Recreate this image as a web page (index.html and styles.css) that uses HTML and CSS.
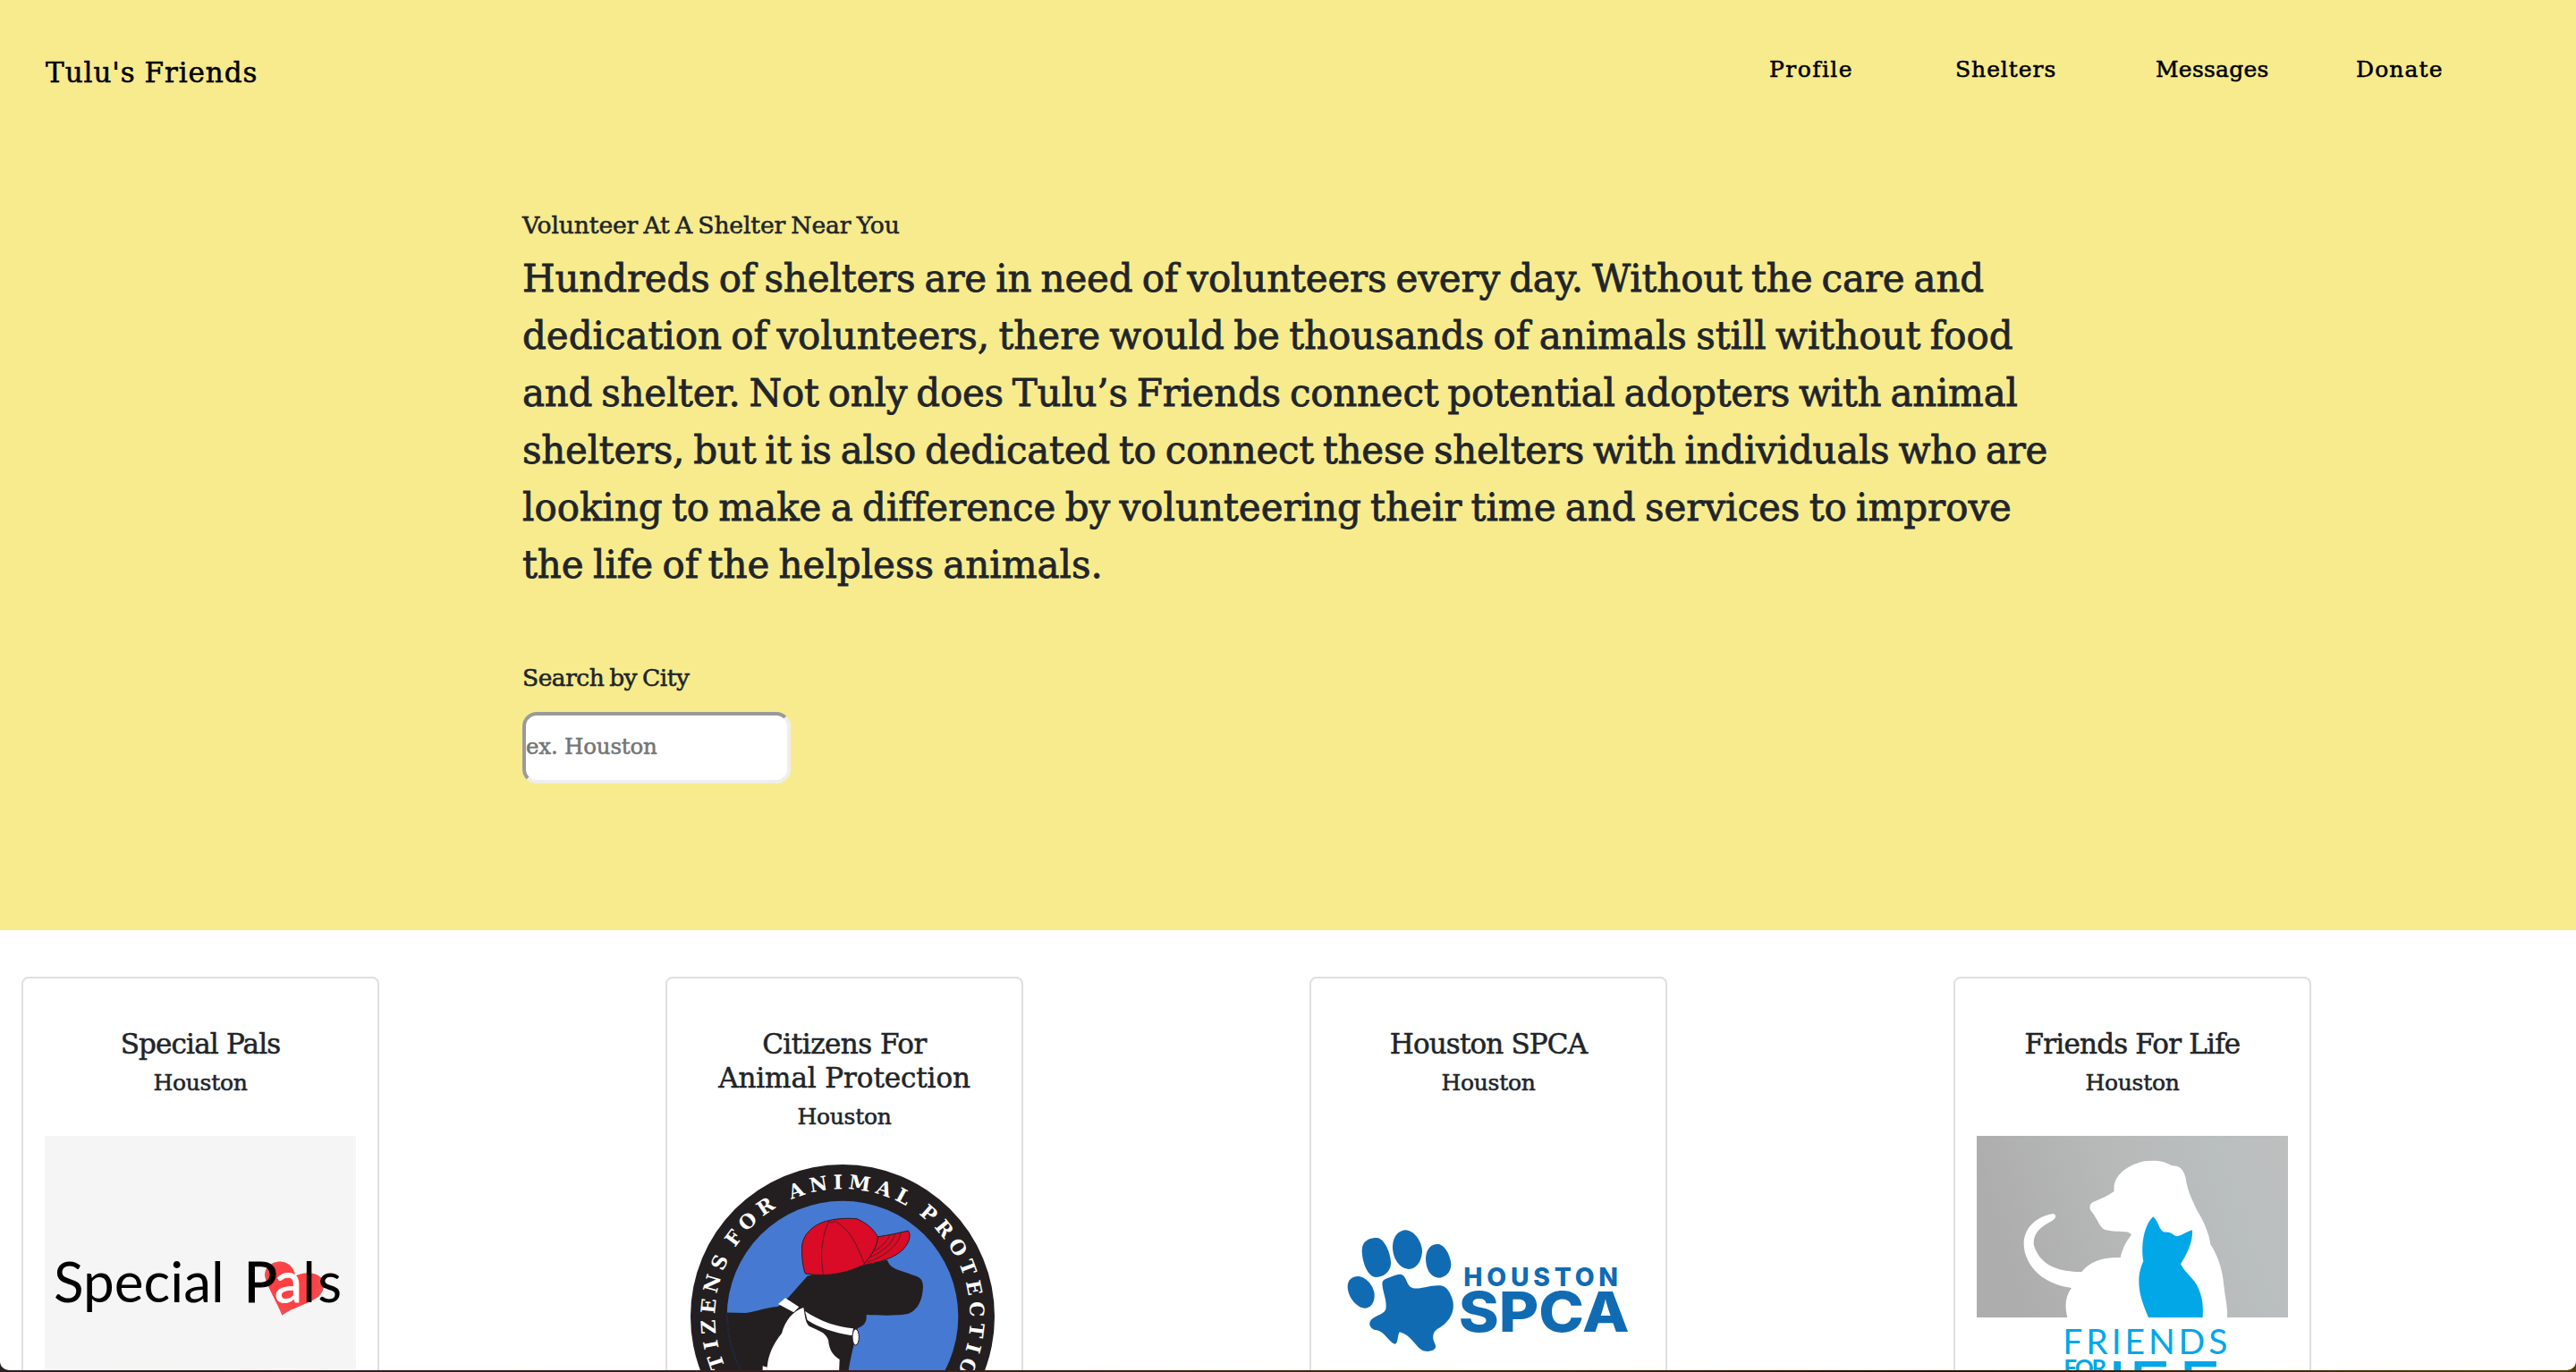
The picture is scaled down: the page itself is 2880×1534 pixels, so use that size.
FILE: index.html
```html
<!DOCTYPE html>
<html lang="en">
<head>
<meta charset="utf-8">
<title>Tulu's Friends</title>
<link rel="stylesheet" href="styles.css">
</head>
<body>
<div class="page">
  <section class="hero">
    <header class="topbar">
      <a class="brand">Tulu's Friends</a>
      <nav class="menu">
        <a class="menu-item menu-profile">Profile</a>
        <a class="menu-item menu-shelters">Shelters</a>
        <a class="menu-item menu-messages">Messages</a>
        <a class="menu-item menu-donate">Donate</a>
      </nav>
    </header>
    <div class="intro">
      <h1 class="eyebrow">Volunteer At A Shelter Near You</h1>
      <p class="lead">
        <span class="line tight">Hundreds of shelters are in need of volunteers every day. Without the care and</span>
        <span class="line">dedication of volunteers, there would be thousands of animals still without food</span>
        <span class="line tighter">and shelter. Not only does Tulu’s Friends connect potential adopters with animal</span>
        <span class="line tighter">shelters, but it is also dedicated to connect these shelters with individuals who are</span>
        <span class="line">looking to make a difference by volunteering their time and services to improve</span>
        <span class="line">the life of the helpless animals.</span>
      </p>
      <label class="search-label" for="city">Search by City</label>
      <input class="search-input" id="city" type="text" placeholder="ex. Houston">
    </div>
  </section>
  <section class="shelters">
    <article class="card">
      <h2 class="card-title">Special Pals</h2>
      <p class="card-city">Houston</p>
      <svg class="logo" viewBox="150 630 1044 786" width="348" height="262">
        <defs><radialGradient id="heart" cx=".45" cy=".45" r=".6"><stop offset="0" stop-color="#ff3f42"/><stop offset=".65" stop-color="#fb4246"/><stop offset="1" stop-color="#e2595b"/></radialGradient></defs>
        <rect x="150" y="630" width="1044" height="786" fill="#f5f5f5"/>
        <path d="M946 1232C930 1190 898 1140 889 1104C884 1068 916 1050 945 1052C972 1055 986 1074 991 1100C1015 1086 1056 1084 1078 1106C1094 1126 1086 1158 1062 1174C1030 1194 980 1208 946 1232Z" fill="url(#heart)"/>
        <g font-family="Lato, sans-serif" font-size="186" fill="#000">
          <text x="180" y="1188" textLength="572">Special</text>
          <text x="818" y="1188" stroke="#000" stroke-width="3">P</text>
          <text x="921" y="1188" fill="#fff" stroke="#fff" stroke-width="3">a</text>
          <text x="1015" y="1188">l</text>
          <text x="1066" y="1188">s</text>
        </g>
      </svg>
    </article>
    <article class="card">
      <h2 class="card-title title-wide"><span class="title-first">Citizens For</span><br>Animal Protection</h2>
      <p class="card-city">Houston</p>
      <svg class="logo logo-raised" viewBox="150 690 1044 696" width="348" height="232">
        <defs>
          <path id="ring" d="M666 1634A428 428 0 0 1 666 778A428 428 0 0 1 666 1634"/>
          <clipPath id="disc"><circle cx="666" cy="1206" r="389"/></clipPath>
        </defs>
        <circle cx="666" cy="1206" r="510" fill="#231f20"/>
        <circle cx="666" cy="1206" r="388" fill="#4679d1"/>
        <g clip-path="url(#disc)">
          <path d="M270 1192L340 1194C370 1190 400 1178 450 1172L484 1142L548 1070C620 1050 740 1030 816 1016C822 1036 836 1044 860 1052L912 1070C928 1076 936 1084 936 1108C934 1150 918 1190 880 1198C840 1204 790 1202 746 1200C748 1230 734 1238 716 1246C708 1290 692 1340 684 1400H270Z" fill="#231f20"/>
          <path d="M280 1206C282 1270 300 1340 328 1392" fill="none" stroke="#1c3157" stroke-width="2"/>
          <path d="M474 1144L520 1174L502 1192L450 1164Z" fill="#fff"/>
          <path d="M540 1188C590 1222 650 1242 702 1246L698 1270C640 1262 580 1240 548 1218Z" fill="#fff"/>
          <path d="M535 1176C540 1200 540 1226 554 1238C580 1252 608 1256 618 1284C622 1320 632 1334 656 1350L654 1400H412C412 1350 424 1310 462 1262C474 1220 498 1188 535 1176Z" fill="#fff"/>
          <path d="M398 1372L414 1376L412 1392H398Z" fill="#fff"/>
          <ellipse cx="710" cy="1275" rx="11" ry="27" fill="#fff" stroke="#231f20" stroke-width="3"/>
        </g>
        <g stroke="#231f20" stroke-width="3" stroke-linejoin="round">
          <path d="M784 938C820 934 860 924 886 918C896 930 892 956 870 980C840 1010 790 1024 734 1034Z" fill="#d90b27"/>
          <path d="M541 1062C532 1040 528 1000 530 966C536 928 570 894 620 884C650 876 690 876 714 878C746 892 770 912 784 938C784 970 762 1004 734 1034C690 1056 620 1076 541 1062Z" fill="#d90b27"/>
          <g fill="none" stroke-width="2">
            <path d="M620 886C600 930 588 990 602 1068M640 886C690 910 716 970 738 1026M618 884Q628 898 642 884"/>
            <path d="M862 924C852 970 810 1002 748 1024M842 930C832 962 804 986 760 1006M824 932C818 950 800 970 774 986"/>
          </g>
        </g>
        <g class="ring-text">
          <text><textPath href="#ring" startOffset="636">CITIZENS</textPath></text>
          <text><textPath href="#ring" startOffset="1021">FOR</textPath></text>
          <text><textPath href="#ring" startOffset="1376">ANIMAL</textPath></text>
          <text><textPath href="#ring" startOffset="1960">PROTECTION</textPath></text>
        </g>
      </svg>
    </article>
    <article class="card">
      <h2 class="card-title">Houston SPCA</h2>
      <p class="card-city">Houston</p>
      <svg class="logo" viewBox="150 600 1044 786" width="348" height="262">
        <g fill="#116bb3">
          <path d="M248 985C248 955 268 942 298 942C326 944 346 1000 345 1030C342 1060 318 1074 294 1074C266 1072 248 1020 248 985Z"/>
          <path d="M351 970C352 934 374 916 396 916C428 920 450 960 450 988C448 1024 428 1048 404 1047C370 1044 350 1006 351 970Z"/>
          <path d="M462 1010C464 976 482 962 504 963C528 966 546 1006 547 1032C546 1058 528 1076 504 1076C474 1072 462 1042 462 1010Z"/>
          <path d="M200 1106C200 1082 216 1070 238 1071C268 1076 290 1110 290 1134C290 1160 278 1178 256 1178C226 1174 200 1136 200 1106Z"/>
          <path d="M316 1094C318 1082 326 1080 336 1076C352 1072 366 1062 380 1065C398 1072 396 1094 410 1106C432 1122 474 1098 512 1102C536 1106 544 1130 550 1144C562 1176 550 1210 524 1232C508 1246 490 1248 487 1270C484 1292 500 1300 494 1312C488 1324 462 1326 448 1318C426 1304 410 1266 374 1258C366 1272 370 1298 358 1298C338 1292 324 1256 298 1252C282 1250 272 1240 274 1226C282 1202 318 1204 328 1182C334 1154 316 1120 316 1094Z"/>
          <g font-family="Inter, sans-serif" font-weight="800">
            <text x="589" y="1105" font-size="85" textLength="518">HOUSTON</text>
            <text x="572" y="1256" font-size="187" textLength="573" lengthAdjust="spacingAndGlyphs">SPCA</text>
          </g>
        </g>
      </svg>
    </article>
    <article class="card">
      <h2 class="card-title title-life">Friends For Life</h2>
      <p class="card-city">Houston</p>
      <svg class="logo" viewBox="150 600 1044 786" width="348" height="262">
        <defs><linearGradient id="wall" x1="0" y1=".2" x2="1" y2="0"><stop offset="0" stop-color="#adadad"/><stop offset=".45" stop-color="#b8b9b9"/><stop offset=".75" stop-color="#b9bebf"/><stop offset="1" stop-color="#bdbfbe"/></linearGradient></defs>
        <rect x="150" y="600" width="1044" height="609" fill="url(#wall)"/>
        <path d="M454 1209C444 1170 448 1136 468 1110C376 1100 308 1036 308 960C310 906 352 870 406 861C418 864 418 874 404 884C362 906 340 926 341 964C356 1020 402 1056 502 1056C530 1022 570 1006 632 1008C640 974 652 952 669 932C664 926 660 922 646 922C620 920 590 920 574 912C560 900 552 874 532 850C526 838 530 828 540 822C566 812 592 800 611 786C604 730 662 696 712 685C748 680 782 684 804 700C826 700 842 708 850 738C856 780 868 806 890 852C914 890 930 930 934 964C964 1010 976 1060 980 1110C984 1150 992 1170 990 1209Z" fill="#fff"/>
        <path d="M726 1209C706 1160 694 1130 694 1086C694 1058 702 1036 709 1020C700 970 710 900 742 871C762 890 762 920 780 923C800 920 808 932 820 937C840 934 856 920 873 916C876 960 850 1004 834 1030C850 1062 880 1078 894 1112C908 1146 910 1170 908 1209Z" fill="#02a7e7"/>
        <g fill="#02a7e7" font-family="Lato, sans-serif">
          <text x="439" y="1331" font-size="117" textLength="552">FRIENDS</text>
          <text x="442" y="1408" font-size="78" font-weight="700" textLength="144">FOR</text>
          <text x="588 658 826" y="1528" font-size="240">IFE</text>
        </g>
      </svg>
    </article>
  </section>
</div>
</body>
</html>
```
FILE: styles.css
```css
* { box-sizing: border-box; }
body {
  margin: 0;
  height: 1534px;
  overflow: hidden;
  background: linear-gradient(90deg, #2c2023, #35201c 35%, #4a2a0c 55%, #2a1404 75%, #5a3d0c);
  font-family: "DejaVu Serif", serif;
  color: #212529;
  -webkit-text-stroke: 0.55px currentColor;
}
.page { height: 1532px; overflow: hidden; background: #fff; border-radius: 0 0 10px 10px; }
.hero { height: 1040px; background: #f7eb8e; }
.topbar { display: flex; justify-content: space-between; height: 224px; padding: 53px 0 0 51px; color: #000; }
.brand { font-size: 31px; line-height: 56px; letter-spacing: 0.95px; word-spacing: -1px; }
.menu { display: grid; grid-template-columns: 208px 224px 224px 246px; line-height: 49px; font-size: 25px; }
.menu-profile { letter-spacing: 1.45px; }
.menu-shelters { letter-spacing: 0.95px; }
.menu-messages { letter-spacing: 0.25px; }
.menu-donate { letter-spacing: 1.1px; }
.intro { display: flex; flex-direction: column; align-items: flex-start; padding-left: 584px; }
.eyebrow { margin: 0; font-size: 26.6px; font-weight: 400; line-height: 56px; letter-spacing: -0.14px; word-spacing: -2px; }
.lead { margin: 0; font-size: 42px; line-height: 64px; word-spacing: -3px; white-space: nowrap; -webkit-text-stroke-width: 0.8px; }
.line { display: block; width: max-content; letter-spacing: -0.03px; }
.line.tight { letter-spacing: -0.17px; }
.line.tighter { letter-spacing: -0.27px; }
.search-label { margin-top: 64px; font-size: 26.5px; line-height: 60px; letter-spacing: -0.5px; word-spacing: -2px; }
.search-input {
  width: 300px; height: 80px; margin-top: 8px; padding: 0 0 3px;
  border: 4px inset #eee; border-radius: 16px;
  font: inherit; font-size: 24.5px; letter-spacing: -0.2px; background: #fff;
}
.search-input::placeholder { color: #757575; }
.shelters { display: grid; grid-template-columns: repeat(4, 720px); padding: 52px 0 0 24px; }
.card {
  display: flex; flex-direction: column; align-items: center;
  width: 400px; height: 700px; padding: 54px 24px 0;
  border: 2px solid #dfdfdf; border-radius: 8px; text-align: center;
}
.card-title { margin: 0; font-size: 31px; font-weight: 400; line-height: 38px; letter-spacing: -0.85px; white-space: nowrap; }
.title-wide { letter-spacing: -0.1px; }
.title-first { letter-spacing: -0.5px; }
.title-life { letter-spacing: -0.8px; }
.card-city { margin: 0; font-size: 25px; line-height: 50px; letter-spacing: -0.3px; }
.logo { display: block; margin-top: 34px; flex: none; -webkit-text-stroke: 0; }
.logo-raised { margin-top: 26px; }
.ring-text {
  fill: #fff; font-family: "DejaVu Serif", serif; font-weight: 700; font-size: 66px;
  letter-spacing: 17.5px; text-anchor: middle;
}
```
